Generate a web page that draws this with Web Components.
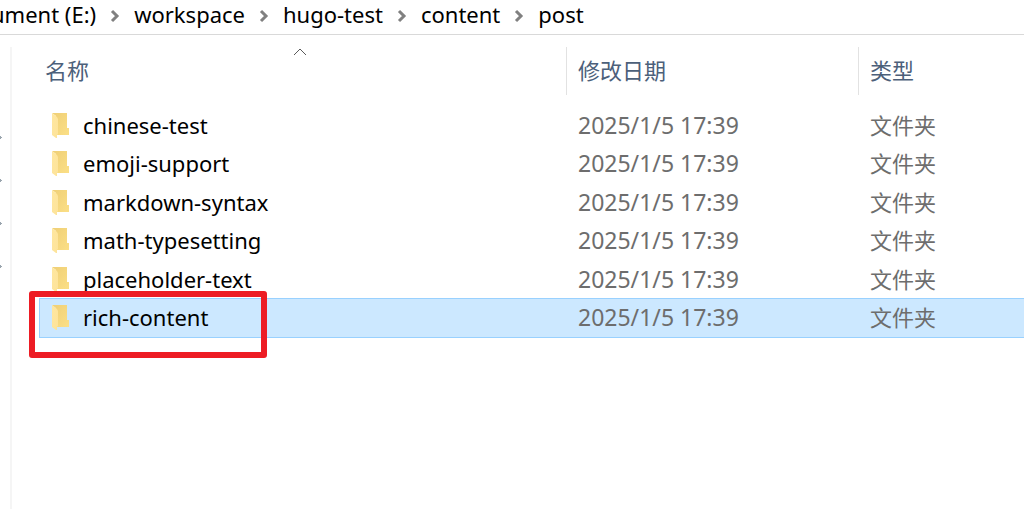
<!DOCTYPE html>
<html lang="zh-CN">
<head>
<meta charset="utf-8">
<title>post</title>
<style>
html, body { margin: 0; height: 100%; }
body { background: #fff; font-family: "Noto Sans", "Noto Sans CJK SC", sans-serif; color: #000; overflow: hidden; }
</style>
</head>
<body>
<explorer-window>
  <address-bar slot="address">
    <path-item>ument (E:)</path-item>
    <path-item>workspace</path-item>
    <path-item>hugo-test</path-item>
    <path-item>content</path-item>
    <path-item last>post</path-item>
  </address-bar>
  <quick-access slot="nav"></quick-access>
  <file-list date="2025/1/5 17:39" kind="文件夹" files="chinese-test,emoji-support,markdown-syntax,math-typesetting,placeholder-text,rich-content" selected="rich-content"></file-list>
</explorer-window>

<script>
class BaseElement extends HTMLElement {
  render(html) {
    const t = document.createElement('template');
    t.innerHTML = html;
    this.attachShadow({ mode: 'open' }).append(t.content.cloneNode(true));
  }
}

customElements.define('explorer-window', class extends BaseElement {
  constructor() {
    super();
    this.render(`<style>
      :host { display: flex; flex-direction: column; height: 100vh; overflow: hidden; }
      .panes { display: flex; flex: 1; min-height: 0; padding-top: 12px; }
      main { flex: 1; min-width: 0; }
    </style>
    <slot name="address"></slot>
    <div class="panes"><slot name="nav"></slot><main><slot></slot></main></div>`);
  }
});

customElements.define('address-bar', class extends BaseElement {
  constructor() {
    super();
    this.render(`<style>
      :host { display: block; border-bottom: 1px solid #d9d9d9; overflow: hidden; }
      nav { display: flex; height: 34px; box-sizing: border-box; padding-bottom: 6px; margin-left: -9px; align-items: center; }
    </style><nav aria-label="路径"><slot></slot></nav>`);
  }
});

customElements.define('path-item', class extends BaseElement {
  constructor() {
    super();
    this.render(`<style>
      :host { display: flex; align-items: center; font-size: 22px; line-height: 30px; white-space: nowrap; }
      a { color: #000; text-decoration: none; }
      svg { width: 10px; height: 14px; margin: 4px 14px 0; }
      :host([last]) svg { display: none; }
    </style><a href="#"><slot></slot></a>
    <svg viewBox="0 0 10 14" aria-hidden="true"><path d="M2 2l5 5-5 5" fill="none" stroke="#808080" stroke-width="3"/></svg>`);
  }
});

customElements.define('quick-access', class extends BaseElement {
  constructor() {
    super();
    const pin = '<svg viewBox="0 0 2 5" aria-hidden="true"><path d="M0 1h1v1h1v1H1v1H0z" fill="#9aa5ae"/></svg>';
    this.render(`<style>
      :host { display: flex; flex-direction: column; gap: 38px; flex: 0 0 10px; padding-top: 88px; border-right: 2px solid #f5f5f5; }
      svg { width: 2px; height: 5px; display: block; }
    </style>${pin.repeat(4)}`);
  }
});

customElements.define('folder-icon', class extends BaseElement {
  constructor() {
    super();
    this.render(`<style>:host { display: block; width: 18px; height: 26px; } svg { display: block; }</style>
    <svg width="18" height="26" viewBox="0 0 18 26" aria-hidden="true">
      <defs>
        <linearGradient id="b" x2="1" y2="1"><stop stop-color="#efcf76"/><stop offset="1" stop-color="#fbdf86"/></linearGradient>
        <linearGradient id="f" x2="1" y2="1"><stop stop-color="#ffe79f"/><stop offset="1" stop-color="#fde39a"/></linearGradient>
      </defs>
      <path d="M0 0h15v15h2v7H4V3z" fill="url(#b)"/>
      <path d="M0 0l5 4 1 2v15l-1 1v3H4L0 22z" fill="url(#f)"/>
    </svg>`);
  }
});

customElements.define('mark-frame', class extends BaseElement {
  constructor() {
    super();
    this.render(`<style>
      :host { position: absolute; box-sizing: border-box; left: -11px; top: -8px; width: 238px; height: 67px; border: 6px solid #ed1c24; border-radius: 3px; pointer-events: none; }
    </style>`);
  }
});

customElements.define('file-list', class extends BaseElement {
  connectedCallback() {
    if (this.shadowRoot) return;
    const date = this.getAttribute('date');
    const kind = this.getAttribute('kind');
    const selected = this.getAttribute('selected');
    const rows = this.getAttribute('files').split(',').map(name => `
      <tr${name === selected ? ' class="selected" aria-selected="true"' : ''}>
        <td class="name"><div class="entry"><folder-icon></folder-icon><span>${name}</span></div>${name === selected ? '<mark-frame></mark-frame>' : ''}</td>
        <td class="date">${date}</td><td class="kind">${kind}</td>
      </tr>`).join('');
    this.render(`<style>
      :host { display: block; padding-left: 28px; }
      table { width: 100%; table-layout: fixed; border-collapse: separate; border-spacing: 0; }
      th, td { padding: 0; text-align: left; vertical-align: middle; font-weight: 400; white-space: nowrap; font-size: 22px; line-height: 30px; }
      .c1 { width: 526px; } .c2 { width: 292px; }
      th { position: relative; height: 46px; padding-bottom: 2px; color: #4c607a; }
      th:first-child { padding-left: 5px; }
      th + th { border-left: 1px solid #e2e2e2; padding-left: 11px; }
      th svg { position: absolute; top: 1px; left: calc(50% - 10px); }
      .gap td { height: 11px; }
      .list tr { height: 38px; }
      .list tr:nth-child(odd) { height: 39px; }
      .date, .kind { color: #6d6d6d; padding: 0 0 2px 12px; }
      .date { font-size: 23px; }
      .name { position: relative; padding-left: 12px; }
      .entry { display: flex; align-items: center; gap: 13px; }
      .entry span { padding-bottom: 2px; }
      .selected { background: #cce8ff; outline: 1px solid #99d1ff; }
    </style>
    <table>
      <colgroup><col class="c1"><col class="c2"><col></colgroup>
      <thead><tr>
        <th scope="col" aria-sort="ascending">名称<svg width="14" height="8" viewBox="0 0 14 8" aria-hidden="true"><path d="M1 7l6-6 6 6" fill="none" stroke="#5a5a5a" stroke-width="1"/></svg></th>
        <th scope="col">修改日期</th><th scope="col">类型</th>
      </tr></thead>
      <tbody class="gap" aria-hidden="true"><tr><td colspan="3"></td></tr></tbody>
      <tbody class="list">${rows}</tbody>
    </table>`);
  }
});
</script>
</body>
</html>
